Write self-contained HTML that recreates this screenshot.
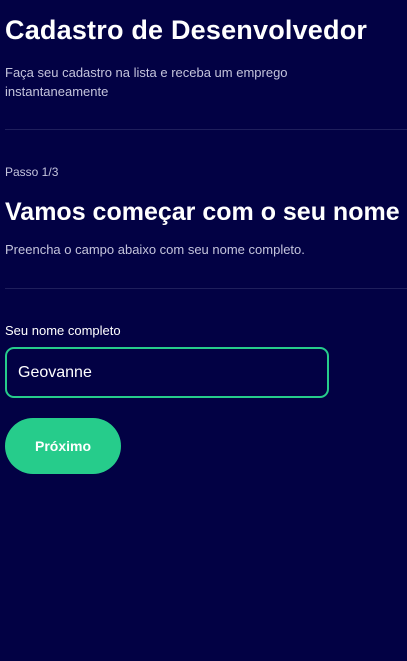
<!DOCTYPE html>
<html><head><meta charset="utf-8"><style>
*{margin:0;padding:0;box-sizing:border-box}
html,body{width:407px;height:661px;background:#020144;overflow:hidden}
body{font-family:"Liberation Sans",sans-serif;color:#fff;position:relative}
.a{position:absolute;left:5px;white-space:nowrap}
h1{font-size:27px;font-weight:bold;top:15px;letter-spacing:0.2px}
.sub{font-size:13px;color:#c4c4dc;line-height:19px;top:63px}
.hr{position:absolute;left:5px;right:0;height:1px;background:#1f1f5c}
.step{font-size:12px;color:#c4c4dc;top:165px}
h2{font-size:25px;font-weight:bold;top:198px}
.d{font-size:13px;color:#c4c4dc;top:242px}
.lbl{font-size:13px;top:323px}
.inp{position:absolute;left:5px;top:347px;width:324px;height:51px;border:2px solid #26cc8b;border-radius:9px;font-size:16px;padding:15px 0 0 11px}
.btn{position:absolute;left:5px;top:418px;width:116px;height:56px;border-radius:28px;background:#26cc8b;font-size:14px;font-weight:bold;text-align:center;line-height:56px}
</style></head><body>
<h1 class="a">Cadastro de Desenvolvedor</h1>
<div class="a sub">Faça seu cadastro na lista e receba um emprego<br>instantaneamente</div>
<div class="hr" style="top:129px"></div>
<div class="a step">Passo 1/3</div>
<h2 class="a">Vamos começar com o seu nome</h2>
<div class="a d">Preencha o campo abaixo com seu nome completo.</div>
<div class="hr" style="top:288px"></div>
<div class="a lbl">Seu nome completo</div>
<div class="inp">Geovanne</div>
<div class="btn">Próximo</div>
</body></html>
